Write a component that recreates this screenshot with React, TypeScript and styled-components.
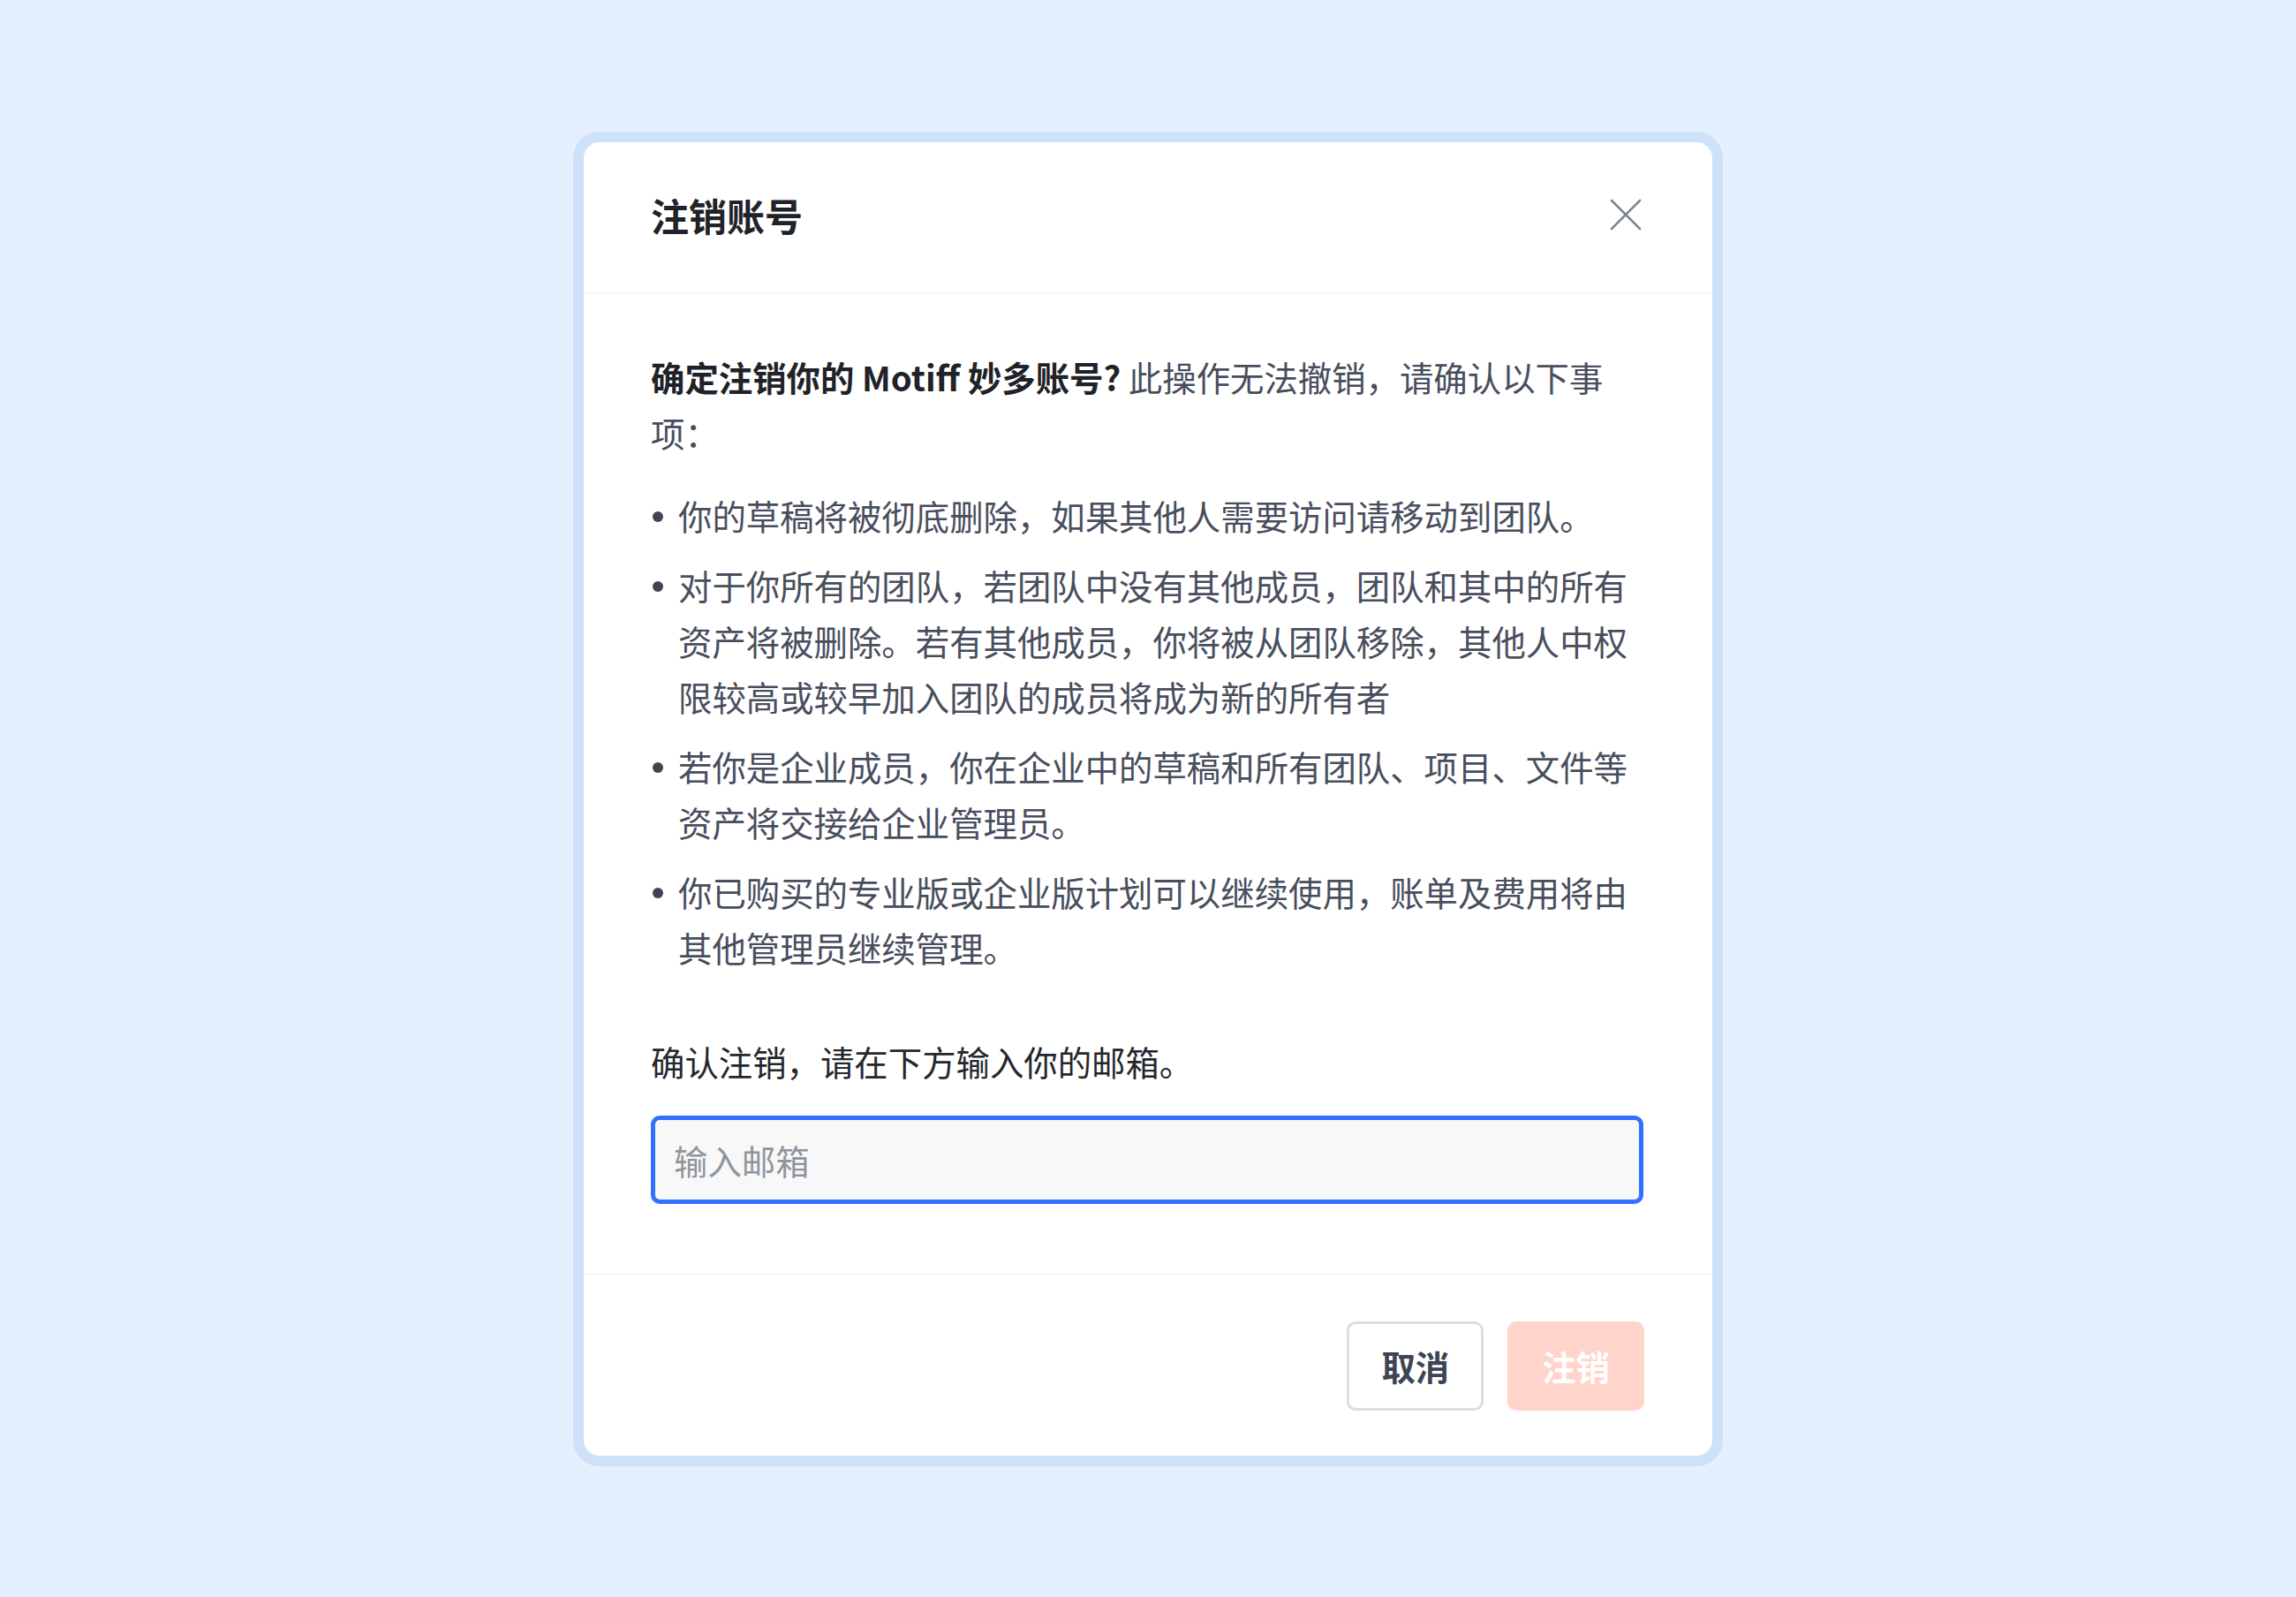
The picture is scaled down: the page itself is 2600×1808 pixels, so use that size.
import styled, { createGlobalStyle } from "styled-components";

const GlobalStyle = createGlobalStyle`
  html, body {
    margin: 0;
    padding: 0;
    background: #e4f0fe;
  }
  body {
    font-family: "Noto Sans CJK SC", "Noto Sans", "Liberation Sans", sans-serif;
    -webkit-font-smoothing: antialiased;
  }
  * {
    box-sizing: border-box;
  }
`;

// notices shown in the bullet list
const NOTICES = [
  "你的草稿将被彻底删除，如果其他人需要访问请移动到团队。",
  "对于你所有的团队，若团队中没有其他成员，团队和其中的所有资产将被删除。若有其他成员，你将被从团队移除，其他人中权限较高或较早加入团队的成员将成为新的所有者",
  "若你是企业成员，你在企业中的草稿和所有团队、项目、文件等资产将交接给企业管理员。",
  "你已购买的专业版或企业版计划可以继续使用，账单及费用将由其他管理员继续管理。",
];

const CloseIcon = () => (
  <svg width="36" height="36" viewBox="0 0 36 36" fill="none">
    <path
      d="M2 2 L34 34 M34 2 L2 34"
      stroke="#7d8594"
      strokeWidth="2.6"
      strokeLinecap="round"
    />
  </svg>
);

const App = () => {
  return (
    <>
      <GlobalStyle />
      <Page>
        <Dialog>
          <Header>
            <Title>注销账号</Title>
            <CloseButton aria-label="关闭">
              <CloseIcon />
            </CloseButton>
          </Header>

          <Body>
            <Intro>
              <strong>确定注销你的 Motiff 妙多账号?</strong> 此操作无法撤销，请确认以下事项：
            </Intro>
            <NoticeList>
              {NOTICES.map((text) => (
                <NoticeItem key={text}>{text}</NoticeItem>
              ))}
            </NoticeList>
            <Label htmlFor="email">确认注销，请在下方输入你的邮箱。</Label>
            <EmailInput id="email" placeholder="输入邮箱" autoFocus />
          </Body>

          <Footer>
            <Button>取消</Button>
            <Button danger disabled>
              注销
            </Button>
          </Footer>
        </Dialog>
      </Page>
    </>
  );
};

const Page = styled.div`
  min-height: 100vh;
  display: flex;
  align-items: center;
  justify-content: center;
`;

const Dialog = styled.div`
  width: 1302px;
  background: #ffffff;
  border: 12px solid #cee1f9;
  border-radius: 30px;
  display: flex;
  flex-direction: column;
  overflow: hidden;
`;

const Header = styled.div`
  height: 172px;
  padding: 0 80px 6px 76px;
  display: flex;
  align-items: center;
  justify-content: space-between;
  border-bottom: 2px solid #f3f4f6;
`;

const Title = styled.h2`
  margin: 0;
  font-size: 43px;
  font-weight: 600;
  line-height: 60px;
  color: #1f2329;
`;

const CloseButton = styled.button`
  width: 36px;
  height: 36px;
  padding: 0;
  border: none;
  background: transparent;
  display: flex;
  align-items: center;
  justify-content: center;
  cursor: pointer;
`;

const Body = styled.div`
  padding: 62px 78px 78px 76px;
  display: flex;
  flex-direction: column;
  font-size: 38.4px;
  line-height: 63px;
  color: #484e5d;

  strong {
    font-weight: 600;
    color: #1f2329;
  }
`;

const Intro = styled.p`
  margin: 0;
`;

const NoticeList = styled.ul`
  margin: 31px 0 0;
  padding: 0;
  list-style: none;
  display: flex;
  flex-direction: column;
  gap: 16px;
`;

const NoticeItem = styled.li`
  position: relative;
  padding-left: 31px;

  &::before {
    content: "";
    position: absolute;
    left: 2px;
    top: 27px;
    width: 12px;
    height: 12px;
    border-radius: 50%;
    background: #3f4553;
  }
`;

const Label = styled.label`
  margin-top: 66px;
  color: #24272d;
`;

const EmailInput = styled.input`
  margin-top: 30px;
  width: 100%;
  height: 100px;
  padding: 0 21px;
  border: 5px solid #3370ff;
  border-radius: 10px;
  background: #f8f8f8;
  font-family: inherit;
  font-size: 38.4px;
  color: #1f2329;
  caret-color: #1f2329;
  outline: none;

  &::placeholder {
    color: #8f959e;
  }
`;

const Footer = styled.div`
  border-top: 2px solid #f3f4f6;
  padding: 53px 77px 51px;
  display: flex;
  justify-content: flex-end;
  gap: 27px;
`;

const Button = styled.button<{ danger?: boolean }>`
  height: 101px;
  min-width: 153px;
  padding: 0 36px;
  border-radius: 10px;
  font-family: inherit;
  font-size: 38.4px;
  font-weight: 600;
  cursor: pointer;
  border: 3px solid ${({ danger }) => (danger ? "#ffd4cb" : "#dcdde2")};
  background: ${({ danger }) => (danger ? "#ffd4cb" : "#ffffff")};
  color: ${({ danger }) => (danger ? "#ffffff" : "#3d4453")};

  &:disabled {
    cursor: not-allowed;
  }
`;

export default App;
